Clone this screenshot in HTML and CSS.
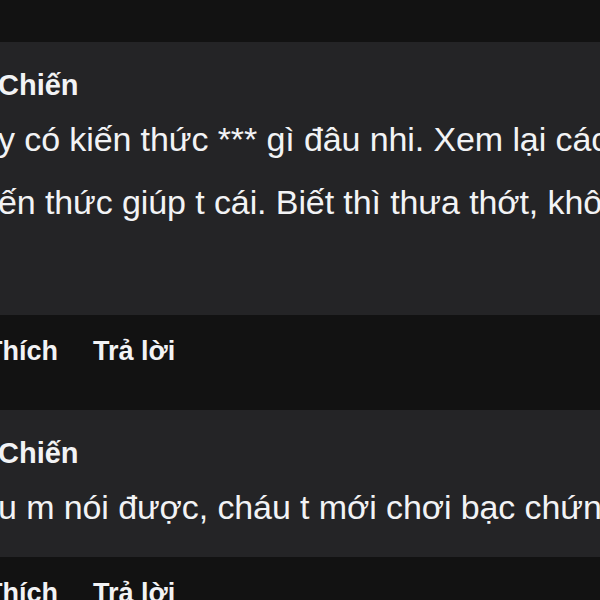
FILE: index.html
```html
<!DOCTYPE html>
<html lang="vi">

<head>
    <meta charset="utf-8" />
    <title>Bình luận</title>

    <link rel="stylesheet" href="styles.css">

</head>

<body>
    <div id="comments">
        <div class="comment">
            <div class="bubble">
                <div class="name">Chiến</div>
                <div class="text tall">
                    <div>y có kiến thức *** gì đâu nhi. Xem lại các</div>
                    <div>ến thức giúp t cái. Biết thì thưa thớt, không</div>
                </div>
            </div>
            <div class="actions">
                <span class="first">Thích</span>
                <span>Trả lời</span>
            </div>
        </div>

        <div class="comment">
            <div class="bubble">
                <div class="name">Chiến</div>
                <div class="text">
                    <div>u m nói được, cháu t mới chơi bạc chứng</div>
                </div>
            </div>
            <div class="actions">
                <span class="first">Thích</span>
                <span>Trả lời</span>
            </div>
        </div>
    </div>
</body>

</html>
```

FILE: styles.css
```css
html {
    font-family: "Liberation Sans", Arial, Helvetica, sans-serif;
}

body {
    margin: 0;
    background-color: #121212;
    color: #f2f3f5;
    overflow: hidden;
}

#comments {
    padding-top: 42px;
    white-space: nowrap;
}

.bubble {
    background-color: #242426;
    padding-top: 25px;
    padding-bottom: 18px;
    overflow: hidden;
}

.name {
    margin-left: -2px;
    font-size: 29px;
    font-weight: bold;
    line-height: 36px;
}

.text {
    margin-top: 5px;
    margin-left: -2px;
    font-size: 34px;
    line-height: 63px;
    letter-spacing: -0.1px;
}

.text.tall {
    min-height: 189px;
}

.actions {
    display: flex;
    gap: 35px;
    height: 95px;
    box-sizing: border-box;
    padding-top: 20px;
    font-size: 27px;
    font-weight: bold;
    line-height: 32px;
}

.actions .first {
    margin-left: -14px;
}
```
